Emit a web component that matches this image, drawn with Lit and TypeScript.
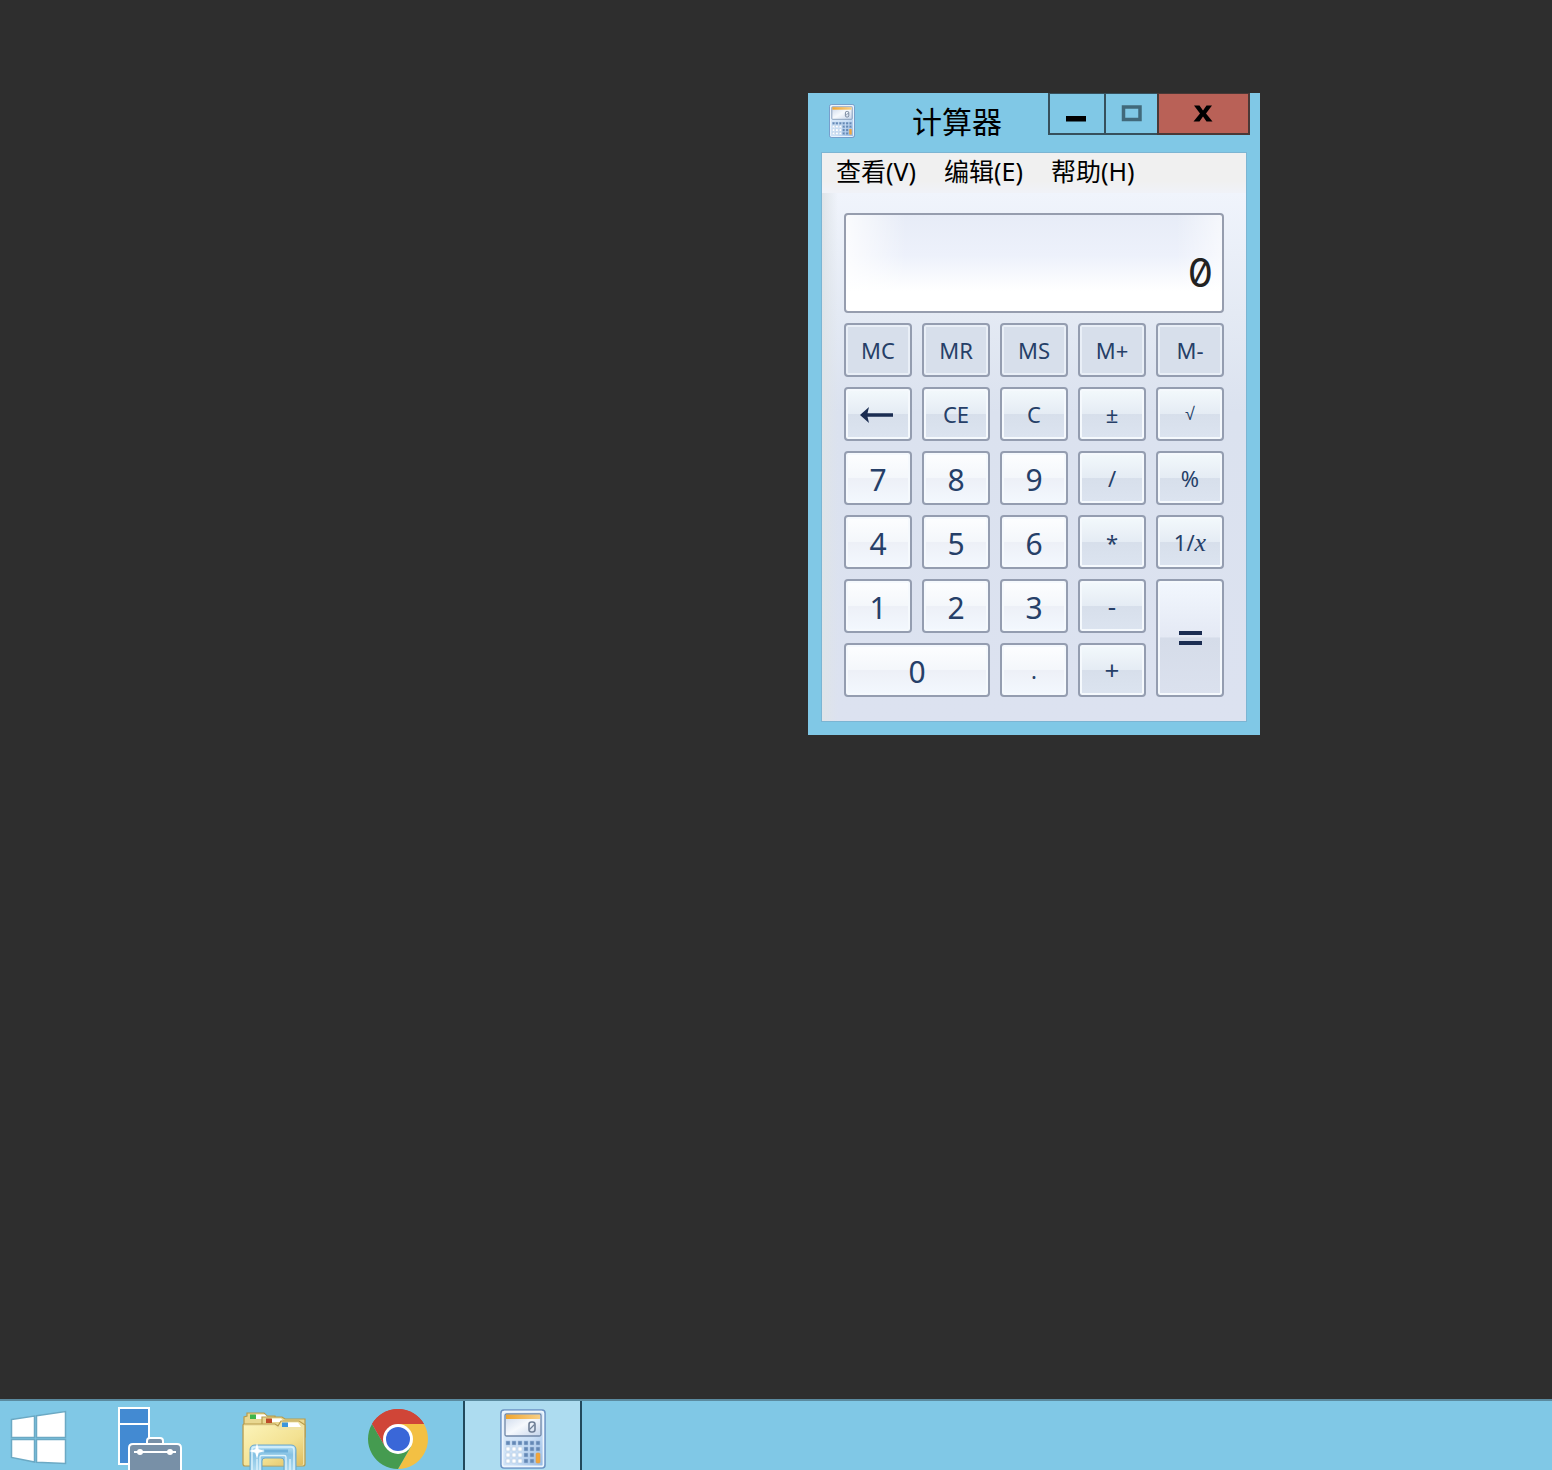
import { LitElement, html, css, svg } from "lit";
import { customElement, state } from "lit/decorators.js";
import { classMap } from "lit/directives/class-map.js";

interface Key {
  id: string;
  kind: "memory" | "operator" | "digit" | "equals";
  label?: string;
  wide?: boolean;
}

const KEYS: Key[] = [
  { id: "MC", kind: "memory" },
  { id: "MR", kind: "memory" },
  { id: "MS", kind: "memory" },
  { id: "M+", kind: "memory" },
  { id: "M-", kind: "memory" },
  { id: "back", kind: "operator", label: "退格" },
  { id: "CE", kind: "operator" },
  { id: "C", kind: "operator" },
  { id: "±", kind: "operator" },
  { id: "√", kind: "operator" },
  { id: "7", kind: "digit" },
  { id: "8", kind: "digit" },
  { id: "9", kind: "digit" },
  { id: "/", kind: "operator" },
  { id: "%", kind: "operator" },
  { id: "4", kind: "digit" },
  { id: "5", kind: "digit" },
  { id: "6", kind: "digit" },
  { id: "*", kind: "operator" },
  { id: "1/x", kind: "operator" },
  { id: "1", kind: "digit" },
  { id: "2", kind: "digit" },
  { id: "3", kind: "digit" },
  { id: "-", kind: "operator" },
  { id: "=", kind: "equals" },
  { id: "0", kind: "digit", wide: true },
  { id: ".", kind: "digit" },
  { id: "+", kind: "operator" },
];

@customElement("calc-icon")
class CalcIcon extends LitElement {
  static styles = css`
    :host { display: block; }
    .art { display: block; width: 100%; height: 100%; }
  `;

  render() {
    const dots = [];
    for (let r = 0; r < 4; r++) {
      for (let c = 0; c < 6; c++) {
        if (c === 5 && r > 1) continue;
        const pale = c < 3 && r > 0;
        dots.push(svg`<rect x=${6 + c * 6} y=${32 + r * 6} width="4" height="4"
          fill=${pale ? "#ffffff" : "#6488b5"} stroke=${pale ? "#b3c8e0" : "#9fbbdc"} stroke-width=".6"></rect>`);
      }
    }
    return html`
      <svg class="art" viewBox="0 0 46 60" aria-hidden="true">
        <defs>
          <linearGradient id="body" x1="0" y1="0" x2="1" y2="1">
            <stop offset="0" stop-color="#e3effb"></stop>
            <stop offset=".6" stop-color="#cbe0f6"></stop>
            <stop offset="1" stop-color="#8fb5e2"></stop>
          </linearGradient>
          <linearGradient id="glass" x1="0" y1="0" x2="1" y2="1">
            <stop offset="0" stop-color="#c9d6ea"></stop>
            <stop offset=".5" stop-color="#f6f9fd"></stop>
            <stop offset="1" stop-color="#c4d4ea"></stop>
          </linearGradient>
          <linearGradient id="amber" x1="0" y1="0" x2="1" y2="0">
            <stop offset="0" stop-color="#f0a52f"></stop>
            <stop offset="1" stop-color="#f8cf86"></stop>
          </linearGradient>
        </defs>
        <rect x="1" y="1" width="44" height="58" rx="3" fill="url(#body)" stroke="#6c93c3" stroke-width="1.600"></rect>
        <rect x="2.600" y="2.600" width="40.800" height="54.800" rx="2" fill="none" stroke="#eff6fd" stroke-width="1.600"></rect>
        <rect x="5" y="5" width="36" height="22" rx="1.500" fill="url(#glass)" stroke="#7188a8" stroke-width="1.300"></rect>
        <rect x="6" y="5.600" width="34" height="4.400" fill="url(#amber)"></rect>
        <rect x="29" y="13" width="6" height="10" rx="2.500" fill="none" stroke="#6f7f96" stroke-width="1.600"></rect>
        <path d="M29.500 20.500 34.500 15.500" stroke="#6f7f96" stroke-width="1.300"></path>
        ${dots}
        <rect x="36" y="44" width="4" height="10" rx="1" fill="#f0a63c" stroke="#e0a04a" stroke-width=".6"></rect>
      </svg>
    `;
  }
}

@customElement("calc-window")
class CalcWindow extends LitElement {
  @state() private shown = "0";
  private memory = 0;
  private held: number | null = null;
  private pending = "";
  private fresh = true;

  static styles = css`
    :host {
      display: block;
      box-sizing: border-box;
      padding: 0 14px 14px;
      background: #80c8e6;
      color: #000;
      font-family: "Noto Sans", "Noto Sans CJK SC", sans-serif;
    }
    button { font-family: inherit; margin: 0; padding: 0; }
    .titlebar { display: flex; height: 60px; margin-right: -4px; align-items: flex-start; }
    .app-icon { width: 26px; height: 34px; margin: 11px 0 0 7px; }
    .title {
      flex: 1;
      margin: 0;
      padding: 7px 0 0 11px;
      text-align: center;
      font-size: 30px;
      font-weight: 400;
      line-height: 44px;
    }
    .controls {
      display: grid;
      grid-template-columns: 56px 53px 93px;
      height: 42px;
      box-sizing: border-box;
    }
    .control {
      display: grid;
      place-items: center;
      border: solid #36505c;
      border-width: 1px 0 2px 2px;
      background: transparent;
    }
    .control.close { background: #b96157; border-right-width: 2px; border-color: #4a3836; }
    .glyph { display: block; width: 22px; height: 22px; }
    .client {
      background: linear-gradient(90deg, #dfe4e8 0, rgba(223, 228, 232, 0) 16px),
        linear-gradient(#f0f4fc 40px, #e4eaf4 160px, #dbe2ef 260px, #dce2f0);
      box-shadow: 0 0 0 1px #7cb5d3;
    }
    .menu {
      display: flex;
      gap: 28px;
      height: 40px;
      padding: 0 14px;
      background: linear-gradient(#f0f0f0 28px, #f0f2f8);
    }
    .menu-item { border: 0; background: none; font-size: 25px; line-height: 36px; height: 36px; color: #000; white-space: nowrap; }
    .pad { padding: 20px 22px 24px; display: grid; gap: 10px; }
    .display {
      display: block;
      width: 100%;
      height: 100px;
      box-sizing: border-box;
      border: 2px solid #969dae;
      border-radius: 4px;
      padding: 18px 9px 0;
      background: linear-gradient(90deg, rgba(255, 255, 255, 0.8) 0, rgba(255, 255, 255, 0) 60px, rgba(255, 255, 255, 0) 330px, rgba(255, 255, 255, 0.6)),
        linear-gradient(#e7ecf7, #edf1fb 40px, #fff 76px);
      font: 400 40px "Inter", sans-serif;
      font-feature-settings: "zero";
      text-align: right;
      color: #222;
      outline: none;
    }
    .keys { display: grid; grid-template-columns: repeat(5, 1fr); grid-auto-rows: 54px; gap: 10px; }
    .key {
      display: grid;
      place-items: center;
      border: 2px solid #949db0;
      border-radius: 4px;
      box-shadow: inset 0 0 0 2px #f5f9fd;
      color: #263f68;
      font-size: 22px;
      line-height: 30px;
      background: linear-gradient(#f3f9fc, #e5ecf4 49%, #d7dfeb 50%, #dce4f0);
    }
    .key.memory { background: #d7dfeb; box-shadow: inset 0 0 0 2px #e9eff7; }
    .key.digit {
      background: linear-gradient(#fdfeff, #f4f7fb 49%, #edf0f7 51%, #f3f8fe);
      font-size: 30px;
      padding-top: 3px;
    }
    .key.point { font-size: 22px; padding-top: 0; }
    .key.sign { font-size: 26px; }
    .key.root { font-family: "Liberation Sans", sans-serif; font-size: 18px; }
    .key.wide { grid-column: span 2; }
    .key.equals { grid-row: span 2; background: linear-gradient(#f2f7fe, #e4e9f4 49%, #d5dce9 50%, #dbe1ee); }
    .key:active { filter: brightness(0.94); }
    .key .arrow { width: 36px; height: 18px; display: block; }
    .key .bars { width: 24px; height: 16px; display: block; }
    .var { font-family: "Liberation Serif", serif; font-style: italic; font-size: 26px; line-height: 22px; }
  `;

  private compute(a: number, b: number): number {
    switch (this.pending) {
      case "+": return a + b;
      case "-": return a - b;
      case "*": return a * b;
      case "/": return a / b;
      default: return b;
    }
  }

  private put(value: number) {
    this.shown = String(Number(value.toPrecision(12)));
    this.fresh = true;
  }

  private press(id: string) {
    const now = Number(this.shown);
    if (/^[0-9.]$/.test(id)) {
      if (this.fresh) this.shown = id === "." ? "0." : id;
      else if (id !== "." || !this.shown.includes(".")) this.shown += id;
      this.fresh = this.shown === "0";
      return;
    }
    switch (id) {
      case "MC": this.memory = 0; break;
      case "MR": this.put(this.memory); break;
      case "MS": this.memory = now; break;
      case "M+": this.memory += now; break;
      case "M-": this.memory -= now; break;
      case "back": if (!this.fresh) this.shown = this.shown.slice(0, -1) || "0"; break;
      case "CE": this.put(0); break;
      case "C": this.put(0); this.held = null; this.pending = ""; break;
      case "±": this.put(-now || 0); break;
      case "√": this.put(Math.sqrt(now)); break;
      case "1/x": this.put(1 / now); break;
      case "%": this.put(((this.held ?? 0) * now) / 100); break;
      default: {
        const result = this.held === null ? now : this.compute(this.held, now);
        this.put(result);
        this.held = id === "=" ? null : result;
        this.pending = id === "=" ? "" : id;
      }
    }
  }

  private face(id: string) {
    if (id === "back") {
      return html`<svg class="arrow" viewBox="0 0 36 18" aria-hidden="true">
        <path d="M0 10 9 2 7.500 8.300H33V11.700H7.500L9 18Z" fill="#1b2d52"></path>
      </svg>`;
    }
    if (id === "=") {
      return html`<svg class="bars" viewBox="0 0 24 16" aria-hidden="true">
        <path d="M1 1H24V5H1ZM1 11H24V15H1Z" fill="#1b2d52"></path>
      </svg>`;
    }
    if (id === "1/x") return html`<span>1/<span class="var">x</span></span>`;
    return html`<span>${id}</span>`;
  }

  render() {
    return html`
      <header class="titlebar">
        <calc-icon class="app-icon"></calc-icon>
        <h1 class="title">计算器</h1>
        <div class="controls">
          <button class="control" aria-label="最小化">
            <svg class="glyph" viewBox="0 0 22 22"><path d="M0 13H20V18.500H0Z"></path></svg>
          </button>
          <button class="control" aria-label="最大化">
            <svg class="glyph" viewBox="0 0 22 22">
              <rect x="2.500" y="4" width="16.500" height="12.500" fill="none" stroke="#41697b" stroke-width="3.500"></rect>
            </svg>
          </button>
          <button class="control close" aria-label="关闭">
            <svg class="glyph" viewBox="0 0 22 22">
              <path d="M1 2.500H6.500L10 7.500 13.500 2.500H19L13 10.500 19.500 18.500H13.500L10 13.500 6.500 18.500H.5L7 10.500Z"></path>
            </svg>
          </button>
        </div>
      </header>
      <main class="client">
        <nav class="menu">
          <button class="menu-item">查看(V)</button>
          <button class="menu-item">编辑(E)</button>
          <button class="menu-item">帮助(H)</button>
        </nav>
        <div class="pad">
          <input class="display" type="text" readonly aria-label="结果" .value=${this.shown} />
          <div class="keys">
            ${KEYS.map(
              (k) => html`<button
                class=${classMap({
                  key: true,
                  [k.kind]: true,
                  wide: !!k.wide,
                  point: k.id === ".",
                  root: k.id === "√",
                  sign: k.id === "+" || k.id === "-",
                })}
                aria-label=${k.label ?? k.id}
                @click=${() => this.press(k.id)}
              >${this.face(k.id)}</button>`
            )}
          </div>
        </div>
      </main>
    `;
  }
}

@customElement("task-bar")
class TaskBar extends LitElement {
  static styles = css`
    :host {
      display: flex;
      height: 71px;
      box-sizing: border-box;
      border-top: 2px solid #5b8ba0;
      background: #80c8e6;
      overflow: hidden;
    }
    .task {
      display: grid;
      justify-items: center;
      align-items: start;
      box-sizing: border-box;
      width: 124px;
      margin: 0;
      padding: 6px 0 0;
      border: 0;
      background: none;
    }
    .task.start { width: 88px; padding: 8px 12px 0 0; }
    .task.active {
      width: 119px;
      margin-left: 3px;
      border: solid #22495c;
      border-width: 0 2px;
      background: #addcf0;
    }
    .icon { display: block; width: 64px; height: 64px; }
    .calc { width: 46px; height: 60px; margin-top: 2px; }
  `;

  render() {
    return html`
      <button class="task start" aria-label="开始">
        <svg class="icon" viewBox="0 0 64 64">
          <path d="M5.500 10.500 28.500 7V28.500H5.500ZM30.500 6.700 59.500 2.500V28.500H30.500ZM5.500 30.500H28.500V53L5.500 48.500ZM30.500 30.500H59.500V54.500L30.500 53.300Z"
            fill="#fff" stroke="#6ba9c4" stroke-width="1.500"></path>
        </svg>
      </button>
      <button class="task" aria-label="服务器管理器">
        <svg class="icon" viewBox="0 0 64 64">
          <path d="M1 1H31V57H1Z" fill="#438ad2" stroke="#fff" stroke-width="2"></path>
          <path d="M1 17H31" stroke="#fff" stroke-width="2"></path>
          <path d="M29 38V34Q29 31 32 31H42Q45 31 45 34V38" fill="#7890a7" stroke="#fff" stroke-width="2"></path>
          <path d="M11 66V41Q11 37 15 37H59Q63 37 63 41V66Z" fill="#7890a7" stroke="#fff" stroke-width="2"></path>
          <path d="M16 45H58" stroke="#fff" stroke-width="2"></path>
          <circle cx="22" cy="45" r="3" fill="#fff"></circle>
          <circle cx="52" cy="45" r="3" fill="#fff"></circle>
        </svg>
      </button>
      <button class="task" aria-label="文件资源管理器">
        <svg class="icon" viewBox="0 0 64 64">
          <defs>
            <linearGradient id="folder" x1="0" y1="0" x2="1" y2="1">
              <stop offset="0" stop-color="#fbf3b8"></stop>
              <stop offset=".6" stop-color="#f3e191"></stop>
              <stop offset="1" stop-color="#dfbd5e"></stop>
            </linearGradient>
            <linearGradient id="stand" x1="0" y1="0" x2="0" y2="1">
              <stop offset="0" stop-color="#b9e2f5"></stop>
              <stop offset=".35" stop-color="#86c2e4"></stop>
              <stop offset="1" stop-color="#b5def2"></stop>
            </linearGradient>
          </defs>
          <path d="M2 16V10L5 9V6H22L25 9H33V30H2Z" fill="#e9d891" stroke="#b89b4b" stroke-width="1.200"></path>
          <path d="M13 7.500H23L27 12H13Z" fill="#fff"></path>
          <rect x="8" y="7.500" width="6" height="4.500" fill="#3fb549"></rect>
          <path d="M20 17V10H40L43 12H63V30H20Z" fill="#e9d891" stroke="#b89b4b" stroke-width="1.200"></path>
          <path d="M29 11.500H39L42 15H29Z" fill="#fff"></path>
          <rect x="24" y="11.500" width="6" height="4.500" fill="#bd4a28"></rect>
          <path d="M2 17H33L36 19 39 14H57L63 18V57Q63 59 61 59H3Q1 59 1 57V18Q1 17 2 17Z" fill="#f0e3a4" stroke="#b89b4b" stroke-width="1.200"></path>
          <path d="M45 15.500H56L59 20H45Z" fill="#fff"></path>
          <rect x="40" y="15.500" width="6" height="4.500" fill="#3c95dc"></rect>
          <path d="M2 19H33Q36 23 39 23H61V57Q61 58 60 58H4Q2 58 2 57Z" fill="url(#folder)"></path>
          <path d="M8 66V43Q8 38 13 38H49Q54 38 54 43V66H42V54Q42 51 39 51H23Q20 51 20 54V66Z"
            fill="url(#stand)" stroke="#6aa7cc" stroke-width="1"></path>
          <path d="M10 66V43Q10 40 13 40H49Q52 40 52 43V66" fill="none" stroke="#d9f1fb" stroke-width="1.500"></path>
          <path d="M15 66V52M18 66V50Q18 48.500 20 48.500H42Q44 48.500 44 50V66M48 66V52" fill="none" stroke="#e0f4fc" stroke-width="1.300"></path>
          <path d="M22 44H46" stroke="#6fb1da" stroke-width="3"></path>
          <path d="M15 36 16.700 42.300 23 44 16.700 45.700 15 52 13.300 45.700 7 44 13.300 42.300Z" fill="#fff"></path>
        </svg>
      </button>
      <button class="task" aria-label="Google Chrome">
        <svg class="icon" viewBox="0 0 64 64">
          <path d="M32 32 6.020 17A30 30 0 0 1 57.980 17Z" fill="#d04537"></path>
          <path d="M32 17H57.980A30 30 0 0 1 32 62L45 39.500Z" fill="#f3c043"></path>
          <path d="M6.020 17A30 30 0 0 0 32 62L45 39.500 32 32 19 39.500Z" fill="#459b50"></path>
          <path d="M6.020 17 19 39.500 32 32 32 17H57.980A30 30 0 0 0 6.020 17Z" fill="#d04537"></path>
          <circle cx="32" cy="32" r="15" fill="#fff"></circle>
          <circle cx="32" cy="32" r="12" fill="#3a67d8"></circle>
        </svg>
      </button>
      <button class="task active" aria-label="计算器">
        <calc-icon class="calc"></calc-icon>
      </button>
    `;
  }
}

@customElement("app-root")
class AppRoot extends LitElement {
  static styles = css`
    :host {
      display: flex;
      flex-direction: column;
      position: relative;
      min-height: 100vh;
      background: #2e2e2e;
      font-family: "Noto Sans", "Noto Sans CJK SC", sans-serif;
    }
    .desktop { flex: 1; }
    .floating { position: absolute; left: 808px; top: 93px; width: 452px; }
  `;

  render() {
    return html`
      <div class="desktop">
        <calc-window class="floating"></calc-window>
      </div>
      <task-bar></task-bar>
    `;
  }
}
